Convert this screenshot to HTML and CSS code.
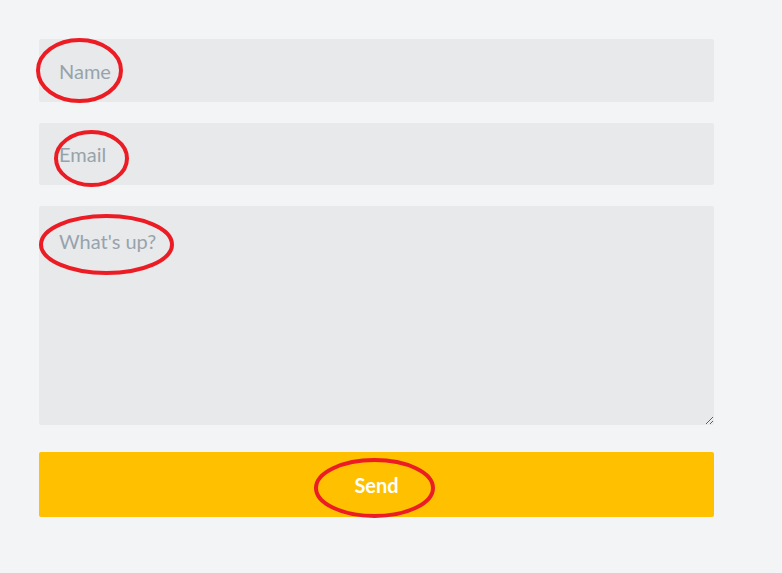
FILE: index.html
```html
<!DOCTYPE html>
<html lang="en">
<head>
  <meta charset="UTF-8">
  <title>Contact</title>
  <link rel="stylesheet" href="styles.css">
</head>
<body>
  <form class="contact-form" onsubmit="return false;">
    <input type="text" class="field field-name" placeholder="Name">
    <input type="email" class="field field-email" placeholder="Email">
    <textarea class="field field-message" placeholder="What's up?"></textarea>
    <button type="submit" class="send-btn">Send</button>
  </form>

  <svg class="marks" width="782" height="573" viewBox="0 0 782 573">
    <ellipse cx="79.5" cy="70.5" rx="41.5" ry="30.5" />
    <ellipse cx="91.5" cy="158.5" rx="35.5" ry="26.5" />
    <ellipse cx="106.5" cy="244.5" rx="65.5" ry="28.5" />
    <ellipse cx="374.5" cy="488" rx="58.5" ry="28" />
  </svg>
</body>
</html>
```

FILE: styles.css
```css
html, body {
  margin: 0;
  padding: 0;
  background: #f3f4f6;
}
body {
  font-family: Lato, "Open Sans", sans-serif;
  min-height: 573px;
  position: relative;
}
.contact-form {
  width: 675px;
  padding: 39px 0 0 39px;
  display: flex;
  flex-direction: column;
}
.field {
  display: block;
  box-sizing: border-box;
  width: 100%;
  border: none;
  border-radius: 2px;
  background: #e8e9eb;
  padding: 0 20px;
  font-family: inherit;
  font-size: 20px;
  color: #333;
  outline: none;
}
.field::placeholder {
  color: #97a3ab;
}
.field-name {
  height: 63px;
  margin-bottom: 21px;
}
.field-email {
  height: 62px;
  margin-bottom: 21px;
}
.field-message {
  height: 219px;
  padding-top: 23px;
  margin-bottom: 27px;
  resize: vertical;
}
.send-btn {
  height: 65px;
  border: none;
  border-radius: 2px;
  background: #ffc000;
  color: #fff;
  font-family: inherit;
  font-size: 20px;
  font-weight: bold;
  cursor: pointer;
}
.marks {
  position: absolute;
  top: 0;
  left: 0;
  pointer-events: none;
}
.marks ellipse {
  fill: none;
  stroke: #ec1c24;
  stroke-width: 4;
}
```
